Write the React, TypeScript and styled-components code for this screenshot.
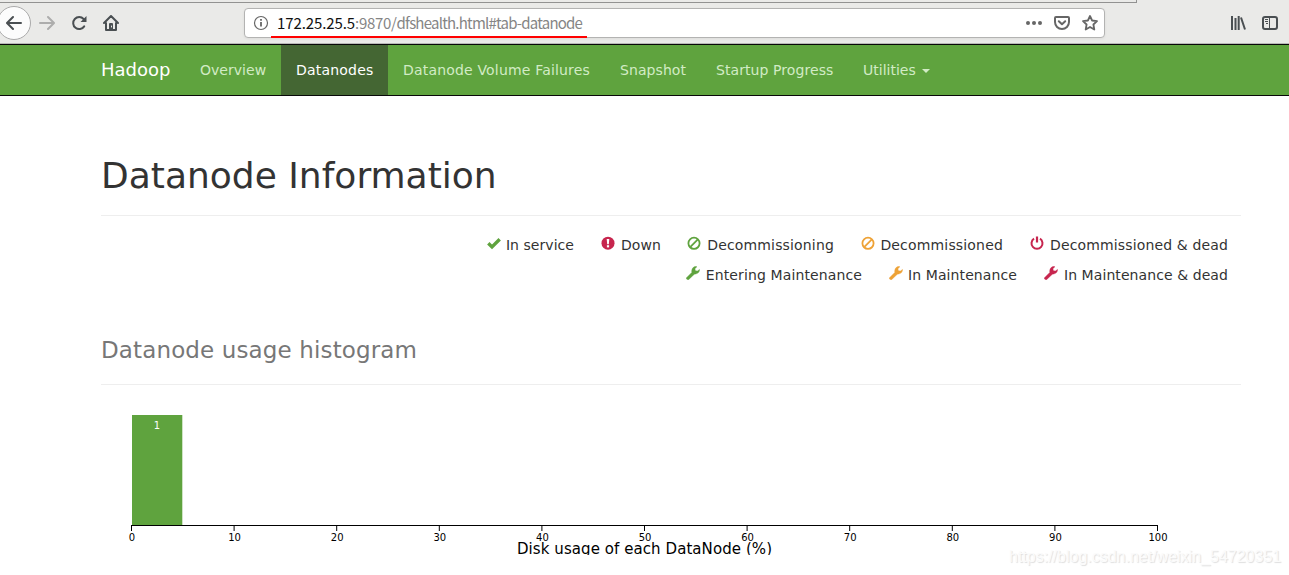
import React from "react";
import styled, { createGlobalStyle } from "styled-components";

const GlobalStyle = createGlobalStyle`
  * { box-sizing: border-box; }
  body { margin: 0; background: #fff; color: #333; font: 14px/20px "DejaVu Sans", sans-serif; overflow: hidden; }
`;

const Page = styled.div`
  position: relative;
  width: 1289px;
  height: 575px;
  overflow: hidden;
`;

const Browser = styled.header`
  height: 44px;
  display: flex;
  flex-direction: column;
  background: #eaeae8;
  border-bottom: 1px solid #b9b9b7;
`;

const TabEdge = styled.div`
  width: 1137px;
  height: 3px;
  flex: none;
  border: solid #929291;
  border-width: 0 1px 1px 0;
`;

const Toolbar = styled.div`
  display: flex;
  align-items: center;
  height: 40px;
  color: #4a4f52;
`;

const BackButton = styled.div`
  width: 34px;
  height: 34px;
  margin-left: -3px;
  flex: none;
  border: 1px solid #aaa;
  border-radius: 50%;
  background: #fcfcfc;
  display: grid;
  place-items: center;
`;

const ToolIcon = styled.span<{ $left: number; $muted?: boolean }>`
  flex: none;
  width: 16px;
  height: 16px;
  margin-left: ${(p) => p.$left}px;
  color: ${(p) => (p.$muted ? "#adadac" : "inherit")};
  svg { display: block; }
`;

const AddressBar = styled.div`
  position: relative;
  display: flex;
  align-items: center;
  flex: none;
  width: 861px;
  height: 30px;
  margin-left: 125px;
  border: 1px solid #b3b3b2;
  border-radius: 4px;
  background: #fff;
  box-shadow: 0 1px 3px rgba(0, 0, 0, 0.06);
  color: #666;
`;

const Url = styled.span`
  width: 724px;
  margin-left: 8px;
  font: 15px/22px "Noto Sans CJK SC", sans-serif;
  letter-spacing: -0.78px;
  color: #858585;
  white-space: nowrap;
`;

const Host = styled.span`
  letter-spacing: -0.1px;
  color: #111;
`;

const Port = styled.span`
  letter-spacing: -0.3px;
`;

const Underline = styled.div`
  position: absolute;
  left: 26px;
  bottom: -1px;
  width: 316px;
  height: 2px;
  background: #f00;
`;

const Navbar = styled.nav`
  display: flex;
  height: 52px;
  padding-left: 101px;
  background: #5fa33e;
  border: solid #080808;
  border-width: 1px 0;
`;

const Brand = styled.div`
  width: 84px;
  font-size: 18px;
  line-height: 50px;
  color: #fff;
`;

const NavItem = styled.div<{ $width: number; $active?: boolean; $tracking?: number }>`
  width: ${(p) => p.$width}px;
  padding-left: 15px;
  line-height: 50px;
  letter-spacing: ${(p) => p.$tracking ?? 0.08}px;
  white-space: nowrap;
  color: ${(p) => (p.$active ? "#fff" : "#d2ebc5")};
  background: ${(p) => (p.$active ? "#446633" : "transparent")};
`;

const Caret = styled.span`
  display: inline-block;
  margin-left: 6px;
  vertical-align: middle;
  border: 4px solid transparent;
  border-top-color: currentColor;
  border-bottom: 0;
`;

const Content = styled.main`
  width: 1140px;
  margin-left: 101px;
  padding-top: 60px;
`;

const Title = styled.h1`
  height: 60px;
  margin: 0;
  border-bottom: 1px solid #eee;
  font-size: 36px;
  font-weight: 400;
  line-height: 39px;
`;

const Subtitle = styled.h3`
  height: 51px;
  margin: 44px 0 20px;
  border-bottom: 1px solid #eee;
  color: #777;
  font-size: 23px;
  font-weight: 400;
  line-height: 32px;
  letter-spacing: 0.13px;
`;

const Legend = styled.ul`
  margin: 14px 0 0;
  padding: 0 13px 0 0;
  list-style: none;
`;

const LegendRow = styled.li`
  display: flex;
  justify-content: flex-end;
  height: 30px;
  line-height: 30px;
`;

const LegendItem = styled.span<{ $width: number; $gap: number; $tracking: number }>`
  display: flex;
  width: ${(p) => p.$width}px;
  margin-left: ${(p) => p.$gap}px;
  justify-content: space-between;
  white-space: nowrap;
  letter-spacing: ${(p) => p.$tracking}px;
  svg { flex: none; margin-top: 6px; }
`;

const Chart = styled.svg`
  display: block;
  overflow: hidden;
`;

const Watermark = styled.div`
  position: absolute;
  left: 1009px;
  top: 546px;
  font: 16px/22px "Liberation Sans", sans-serif;
  color: #fbfbfb;
  text-shadow: 1px 1px 1px #dedede;
  white-space: nowrap;
`;

const GREEN = "#5fa33e";
const ORANGE = "#eea236";
const RED = "#c7254e";

type Kind = "ok" | "alert" | "ban" | "power" | "wrench";

function Glyph({ kind, color }: { kind: Kind; color: string }) {
  return (
    <svg width="14" height="14" viewBox="0 0 14 14" fill="none" stroke={color}>
      {kind === "ok" && <path d="M1.3 7.3 5 10.9 12.7 3.3" strokeWidth="3.4" />}
      {kind === "alert" && (
        <>
          <circle cx="7" cy="7.2" r="6.5" fill={color} stroke="none" />
          <path d="M5.7 2.9h2.6L7.8 8.2H6.2Z" fill="#fff" stroke="none" />
          <path d="M5.9 9.2h2.2v2.2H5.9Z" fill="#fff" stroke="none" />
        </>
      )}
      {kind === "ban" && (
        <>
          <circle cx="7" cy="7.3" r="5.6" strokeWidth="1.8" />
          <path d="m3.4 10.9 7.2-7.2" strokeWidth="1.8" />
        </>
      )}
      {kind === "power" && (
        <>
          <path d="M4 2.7a5.5 5.5 0 1 0 6 0" strokeWidth="2" />
          <path d="M7 .5v6" strokeWidth="2.2" />
        </>
      )}
      {kind === "wrench" && (
        <path
          d="M.5 11.7 5.8 6.4C5.3 3.9 6.5 1.3 8.8.6c.8-.3 1.5-.2 2.1.2L8.9 2.7l.5 2 2 .3 2.2-1.6c.1 2.4-1.5 4.3-3.8 4.5L8.3 8.3 2.8 13.4c-1.1.8-3.2-.6-2.3-1.7Z"
          fill={color}
          stroke={color}
          strokeWidth=".4"
        />
      )}
    </svg>
  );
}

type LegendEntry = { kind: Kind; color: string; label: string; width: number; gap: number; tracking: number };

const legend: LegendEntry[][] = [
  [
    { kind: "ok", color: GREEN, label: "In service", width: 87, gap: 0, tracking: 0.05 },
    { kind: "alert", color: RED, label: "Down", width: 60, gap: 27, tracking: 0.1 },
    { kind: "ban", color: GREEN, label: "Decommissioning", width: 147, gap: 26, tracking: 0.16 },
    { kind: "ban", color: ORANGE, label: "Decommissioned", width: 142, gap: 27, tracking: 0.17 },
    { kind: "power", color: RED, label: "Decommissioned & dead", width: 198, gap: 27, tracking: 0.14 },
  ],
  [
    { kind: "wrench", color: GREEN, label: "Entering Maintenance", width: 176, gap: 0, tracking: 0.12 },
    { kind: "wrench", color: ORANGE, label: "In Maintenance", width: 128, gap: 27, tracking: 0.1 },
    { kind: "wrench", color: RED, label: "In Maintenance & dead", width: 184, gap: 27, tracking: 0.08 },
  ],
];

const navItems = [
  { label: "Overview", width: 96, tracking: 0.03 },
  { label: "Datanodes", width: 107, active: true, tracking: 0.2 },
  { label: "Datanode Volume Failures", width: 217, tracking: 0.18 },
  { label: "Snapshot", width: 96 },
  { label: "Startup Progress", width: 147 },
];

function Histogram() {
  return (
    <Chart width="1140" height="150" fontFamily="DejaVu Sans, sans-serif">
      <g transform="translate(30 10)">
        <rect x="1" width="50.3" height="110" fill={GREEN} />
        <text x="26" y="14" fontSize="10" fill="#fff" textAnchor="middle">1</text>
        <path d="M.5 116V110.5H1026.5V116" fill="none" stroke="#000" />
        {Array.from({ length: 11 }, (_, i) => (
          <g key={i} transform={`translate(${0.5 + i * 102.6} 110)`}>
            <path d="M0 0V6" stroke="#000" />
            <text x=".5" y="16" fontSize="10" fill="#000" textAnchor="middle">{i * 10}</text>
          </g>
        ))}
        <text x="386" y="139" fontSize="15" fill="#000" textLength="255">Disk usage of each DataNode (%)</text>
      </g>
    </Chart>
  );
}

export default function App() {
  return (
    <Page>
      <GlobalStyle />
      <Browser>
        <TabEdge />
        <Toolbar>
          <BackButton>
            <svg width="16" height="16" fill="none" stroke="currentColor" strokeWidth="2" strokeLinecap="round" strokeLinejoin="round"><path d="M15 8H1.5M7 2 1 8l6 6" /></svg>
          </BackButton>
          <ToolIcon $left={8} $muted>
            <svg width="16" height="16" fill="none" stroke="currentColor" strokeWidth="2" strokeLinecap="round" strokeLinejoin="round"><path d="M1 8h13.5M9 2l6 6-6 6" /></svg>
          </ToolIcon>
          <ToolIcon $left={16}>
            <svg width="16" height="16" fill="none" stroke="currentColor" strokeWidth="2"><path d="M13.2 11.4A6 6 0 1 1 12.6 4L14 5.5" strokeLinecap="round" /><path d="M15.5 1v6h-6Z" fill="currentColor" stroke="none" /></svg>
          </ToolIcon>
          <ToolIcon $left={16}>
            <svg width="16" height="16" fill="none" stroke="currentColor" strokeWidth="2" strokeLinecap="round" strokeLinejoin="round"><path d="m1 8 7-7 7 7M3 8v7h10V8" /><path d="M7 9h2v5H7Z" fill="currentColor" /><path d="M8.5 11v1" stroke="#eaeae8" strokeWidth="1" /></svg>
          </ToolIcon>
          <AddressBar>
            <ToolIcon $left={8}>
              <svg width="16" height="16" fill="none" stroke="currentColor"><circle cx="8" cy="8" r="6.5" strokeWidth="1.2" /><path d="M8 7v4.5M8 4v1.7" strokeWidth="1.8" /></svg>
            </ToolIcon>
            <Url><Host>172.25.25.5</Host><Port>:9870/</Port>dfshealth.html#tab-datanode</Url>
            <ToolIcon $left={25}>
              <svg width="16" height="16" fill="currentColor"><circle cx="2" cy="8" r="2" /><circle cx="8" cy="8" r="2" /><circle cx="14" cy="8" r="2" /></svg>
            </ToolIcon>
            <ToolIcon $left={12}>
              <svg width="16" height="16" fill="none" stroke="currentColor" strokeWidth="2" strokeLinecap="round" strokeLinejoin="round"><path d="M2 2h12q1 0 1 1v4a7 7 0 0 1-14 0V3q0-1 1-1Z" /><path d="m4.8 6.2 3.2 3 3.2-3" /></svg>
            </ToolIcon>
            <ToolIcon $left={12}>
              <svg width="16" height="16" fill="none" stroke="currentColor" strokeWidth="1.8" strokeLinejoin="round"><path d="m8 1 2.1 4.5 4.9.6-3.6 3.4.9 5L8 12l-4.3 2.5.9-5L1 6.1l4.9-.6Z" /></svg>
            </ToolIcon>
            <Underline />
          </AddressBar>
          <ToolIcon $left={125}>
            <svg width="16" height="16" fill="none" stroke="currentColor" strokeWidth="2"><path d="M2 1v14M5.5 3v12M8.7 1v14M11 2.5l4 12" /></svg>
          </ToolIcon>
          <ToolIcon $left={16}>
            <svg width="16" height="16" fill="none" stroke="currentColor" strokeWidth="2"><rect x="1" y="2" width="14" height="12" rx="2" /><path d="M7.5 2v12M3 4.5h3M3 6.5h3M4 8.5h2" strokeWidth="1" /></svg>
          </ToolIcon>
        </Toolbar>
      </Browser>
      <Navbar>
        <Brand>Hadoop</Brand>
        {navItems.map((n) => (
          <NavItem key={n.label} $width={n.width} $active={n.active} $tracking={n.tracking}>{n.label}</NavItem>
        ))}
        <NavItem $width={96} $tracking={0}>Utilities<Caret /></NavItem>
      </Navbar>
      <Content>
        <Title>Datanode Information</Title>
        <Legend>
          {legend.map((row, r) => (
            <LegendRow key={r}>
              {row.map((item) => (
                <LegendItem key={item.label} $width={item.width} $gap={item.gap} $tracking={item.tracking}>
                  <Glyph kind={item.kind} color={item.color} />
                  <span>{item.label}</span>
                </LegendItem>
              ))}
            </LegendRow>
          ))}
        </Legend>
        <Subtitle>Datanode usage histogram</Subtitle>
        <Histogram />
      </Content>
      <Watermark>https://blog.csdn.net/weixin_54720351</Watermark>
    </Page>
  );
}
